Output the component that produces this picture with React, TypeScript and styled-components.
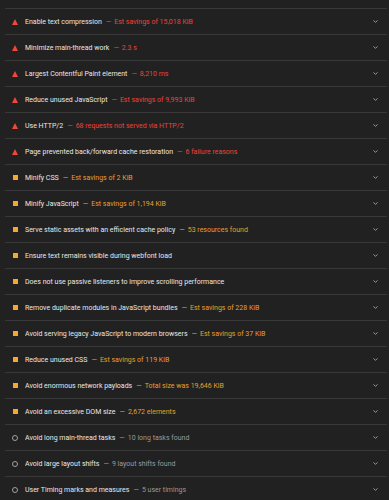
import styled, { createGlobalStyle } from 'styled-components';
import { ChevronDown } from 'lucide-react';

type Level = 'fail' | 'average' | 'info';

const GlobalStyle = createGlobalStyle`
  body {
    margin: 0;
    background: #212121;
    font-family: Roboto, "Noto Sans", sans-serif;
  }
`;

const audits: { level: Level; title: string; detail: string }[] = [
  { level: 'fail', title: 'Enable text compression', detail: 'Est savings of 15,018 KiB' },
  { level: 'fail', title: 'Minimize main-thread work', detail: '2.3 s' },
  { level: 'fail', title: 'Largest Contentful Paint element', detail: '8,210 ms' },
  { level: 'fail', title: 'Reduce unused JavaScript', detail: 'Est savings of 9,993 KiB' },
  { level: 'fail', title: 'Use HTTP/2', detail: '68 requests not served via HTTP/2' },
  { level: 'fail', title: 'Page prevented back/forward cache restoration', detail: '6 failure reasons' },
  { level: 'average', title: 'Minify CSS', detail: 'Est savings of 2 KiB' },
  { level: 'average', title: 'Minify JavaScript', detail: 'Est savings of 1,194 KiB' },
  { level: 'average', title: 'Serve static assets with an efficient cache policy', detail: '53 resources found' },
  { level: 'average', title: 'Ensure text remains visible during webfont load', detail: '' },
  { level: 'average', title: 'Does not use passive listeners to improve scrolling performance', detail: '' },
  { level: 'average', title: 'Remove duplicate modules in JavaScript bundles', detail: 'Est savings of 228 KiB' },
  { level: 'average', title: 'Avoid serving legacy JavaScript to modern browsers', detail: 'Est savings of 37 KiB' },
  { level: 'average', title: 'Reduce unused CSS', detail: 'Est savings of 119 KiB' },
  { level: 'average', title: 'Avoid enormous network payloads', detail: 'Total size was 19,646 KiB' },
  { level: 'average', title: 'Avoid an excessive DOM size', detail: '2,672 elements' },
  { level: 'info', title: 'Avoid long main-thread tasks', detail: '10 long tasks found' },
  { level: 'info', title: 'Avoid large layout shifts', detail: '9 layout shifts found' },
  { level: 'info', title: 'User Timing marks and measures', detail: '5 user timings' },
];

const detailColor: Record<Level, string> = {
  fail: '#ec4339',
  average: '#e99f2c',
  info: '#9a9a9a',
};

const List = styled.div`
  margin: 8px 2px 0 5px;
`;

const Row = styled.div`
  display: flex;
  align-items: center;
  height: 25px;
  border-top: 1px solid #383838;
  padding: 0 8px 0 7px;
`;

const IconBox = styled.span`
  width: 6px;
  height: 6px;
  flex: none;
  display: flex;
  align-items: center;
  justify-content: center;
  margin-right: 7px;
`;

const Triangle = styled.span`
  width: 0;
  height: 0;
  border-left: 3px solid transparent;
  border-right: 3px solid transparent;
  border-bottom: 6px solid #f0463c;
`;

const Square = styled.span`
  width: 5px;
  height: 5px;
  background: #f7a82c;
`;

const Circle = styled.span`
  width: 4px;
  height: 4px;
  border: 1px solid #a0a0a0;
  border-radius: 50%;
`;

const Text = styled.div`
  flex: 1;
  font-size: 7px;
  white-space: nowrap;
  overflow: hidden;
  color: #e8e8e8;
`;

const Detail = styled.span<{ $level: Level }>`
  color: ${(p) => detailColor[p.$level]};
`;

const Dash = styled.span`
  margin: 0 3px 0 4px;
`;

const Chevron = styled(ChevronDown)`
  width: 7px;
  height: 7px;
  color: #a8a8a8;
  flex: none;
`;

const StatusIcon = ({ level }: { level: Level }) => (
  <IconBox>
    {level === 'fail' && <Triangle />}
    {level === 'average' && <Square />}
    {level === 'info' && <Circle />}
  </IconBox>
);

export default function App() {
  return (
    <>
      <GlobalStyle />
      <List>
        {audits.map((a) => (
          <Row key={a.title}>
            <StatusIcon level={a.level} />
            <Text>
              {a.title}
              {a.detail && (
                <Detail $level={a.level}>
                  <Dash>—</Dash>
                  {a.detail}
                </Detail>
              )}
            </Text>
            <Chevron strokeWidth={3} />
          </Row>
        ))}
      </List>
    </>
  );
}
